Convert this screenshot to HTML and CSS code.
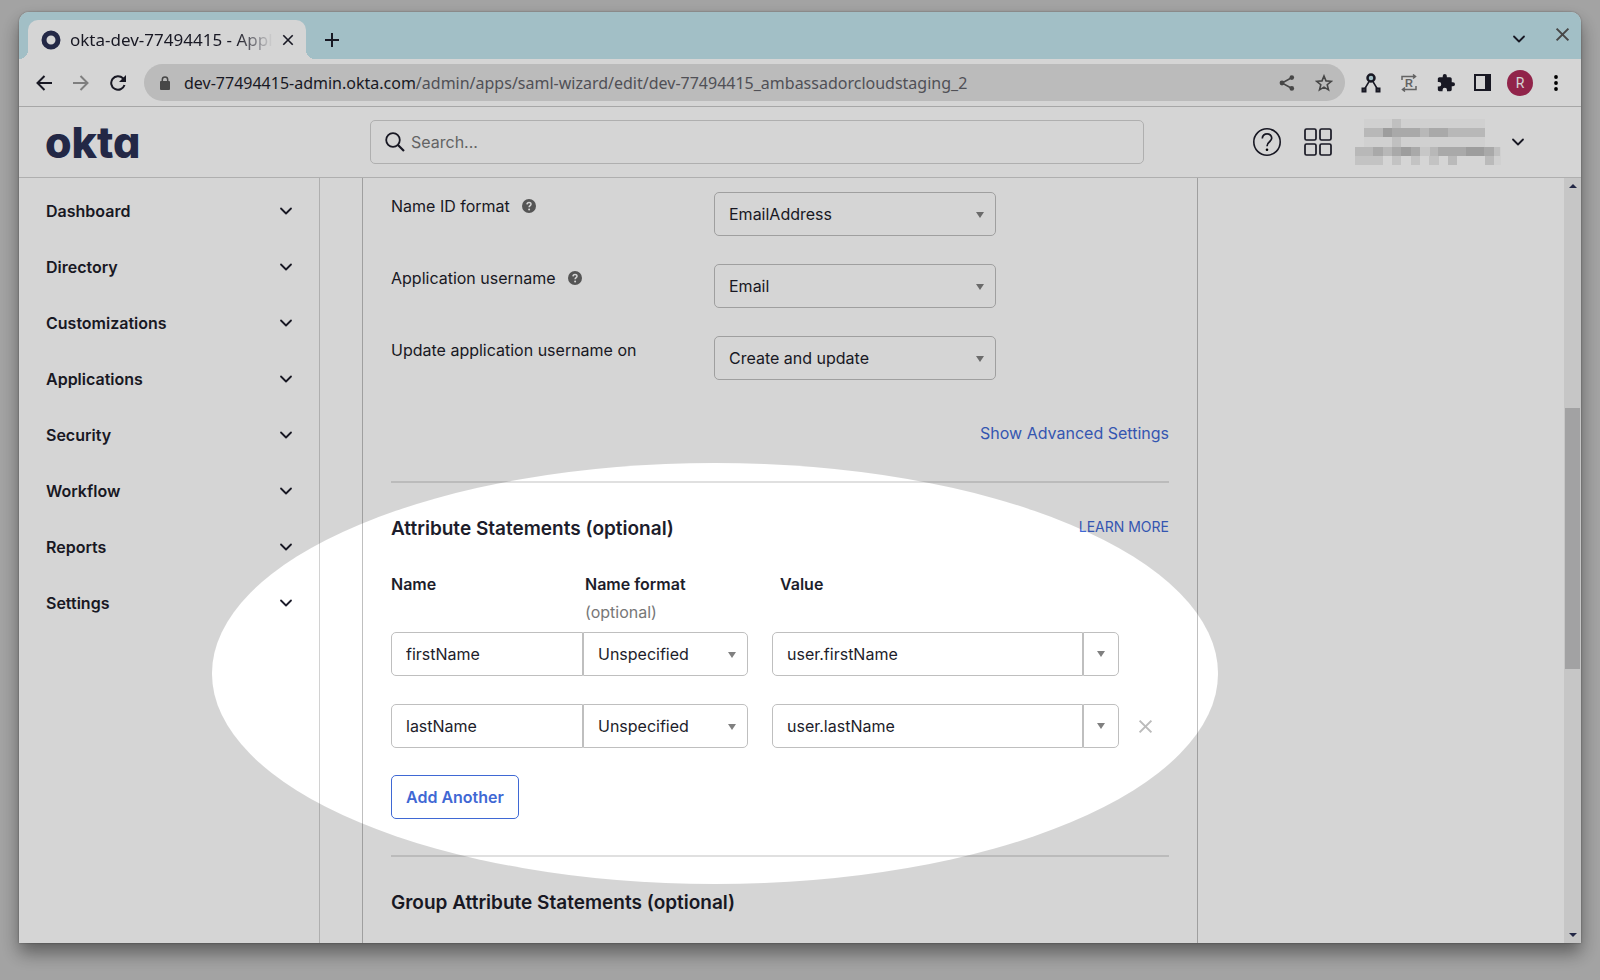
FILE: index.html
```html
<!DOCTYPE html>
<html lang="en">
<head>
<meta charset="utf-8">
<title>okta-dev-77494415 - Applications</title>
<link rel="stylesheet" href="styles.css">
</head>
<body>
<svg class="sprite" aria-hidden="true">
  <symbol id="chevron" viewBox="0 0 14 14"><path d="M2 4.500l5 5 5-5" fill="none" stroke="currentColor" stroke-width="1.800" stroke-linecap="round" stroke-linejoin="round"/></symbol>
  <symbol id="cross" viewBox="0 0 14 14"><path d="M1.500 1.500l11 11m0-11l-11 11" fill="none" stroke="currentColor" stroke-width="1.900"/></symbol>
  <symbol id="help" viewBox="0 0 14 14"><circle cx="7" cy="7" r="7" fill="currentColor"/><path d="M5 5.400c.1-2.600 4.100-2.500 4-.1C9 6.600 7.100 6.700 7.100 8.300" fill="none" stroke="#fff" stroke-width="1.500"/><circle cx="7.100" cy="10.500" r="1" fill="#fff"/></symbol>
</svg>
<div class="window">
  <div class="tabstrip">
    <div class="tab">
      <svg width="20" height="20" viewBox="0 0 20 20"><circle cx="10" cy="10" r="7" fill="none" stroke="#2b3054" stroke-width="5"/></svg>
      <span class="tab-title">okta-dev-77494415 - Appl</span>
      <button class="icon-btn" aria-label="Close tab"><svg width="12" height="12"><use href="#cross"/></svg></button>
    </div>
    <button class="icon-btn new-tab" aria-label="New tab"><svg width="14" height="14" viewBox="0 0 14 14"><path d="M7 0v14M0 7h14" stroke="currentColor" stroke-width="2"/></svg></button>
    <div class="window-btns">
      <button class="icon-btn" aria-label="Search tabs"><svg width="14" height="14"><use href="#chevron"/></svg></button>
      <button class="icon-btn close-window" aria-label="Close window"><svg width="15" height="15"><use href="#cross"/></svg></button>
    </div>
  </div>

  <div class="toolbar">
    <button class="icon-btn" aria-label="Back"><svg width="16" height="16" viewBox="0 0 16 16"><path d="M16 8H2M8.500 1L1.500 8l7 7" fill="none" stroke="currentColor" stroke-width="2"/></svg></button>
    <button class="icon-btn faded" aria-label="Forward"><svg width="16" height="16" viewBox="0 0 16 16"><path d="M0 8h14M7.500 1l7 7-7 7" fill="none" stroke="currentColor" stroke-width="2"/></svg></button>
    <button class="icon-btn" aria-label="Reload"><svg width="16" height="16" viewBox="0 0 16 16"><path d="M14.500 10A6.800 6.800 0 1 1 13 3.300L14.500 5" fill="none" stroke="currentColor" stroke-width="2"/><path d="M16 0v7H9z" fill="currentColor"/></svg></button>
    <div class="omnibox">
      <svg class="lock" width="10" height="14" viewBox="0 0 10 14"><rect y="5" width="10" height="9" rx="1" fill="currentColor"/><path d="M2.300 5.500V3.700a2.700 2.700 0 0 1 5.400 0v1.800" fill="none" stroke="currentColor" stroke-width="1.500"/></svg>
      <span class="url">dev-77494415-admin.okta.com<span class="path">/admin/apps/saml-wizard/edit/dev-77494415_ambassadorcloudstaging_2</span></span>
      <button class="icon-btn" aria-label="Share"><svg width="16" height="16" viewBox="0 0 16 16"><path d="M13 2.500L3 8l10 5.500" fill="none" stroke="currentColor" stroke-width="1.500"/><circle cx="12.800" cy="2.600" r="2.300" fill="currentColor"/><circle cx="3" cy="8" r="2.400" fill="currentColor"/><circle cx="12.800" cy="13.400" r="2.300" fill="currentColor"/></svg></button>
      <button class="icon-btn" aria-label="Bookmark"><svg width="18" height="18" viewBox="0 0 18 18"><path d="M9 2l2 4.900 5.300.4-4.100 3.400 1.300 5.200L9 13.100l-4.500 2.800 1.300-5.200L1.700 7.300 7 6.900z" fill="none" stroke="currentColor" stroke-width="1.600"/></svg></button>
    </div>
    <div class="extensions">
      <button class="icon-btn" aria-label="Graph extension"><svg width="20" height="20" viewBox="0 0 20 20"><path d="M9 7L3 17M11 7l6 10" stroke="currentColor" stroke-width="1.500"/><circle cx="10" cy="5" r="3.500" fill="#c2e5ee" stroke="currentColor" stroke-width="2.500"/><path d="M1.500 15.500h3v3h-3zM15.500 15.500h3v3h-3z" fill="#888" stroke="currentColor" stroke-width="2"/></svg></button>
      <button class="icon-btn muted" aria-label="Redirector"><svg width="18" height="18" viewBox="0 0 18 18"><path d="M2 6V2.500h13M13 .5l2.500 2L13 4.500M16 12v3.500H3M5 13.500l-2.500 2L5 17.500" fill="none" stroke="currentColor" stroke-width="1.500"/><text x="9" y="13" text-anchor="middle" class="r-mark">R</text></svg></button>
      <button class="icon-btn" aria-label="Extensions"><svg width="18" height="18" viewBox="1 1 22 22"><path d="M20.500 11H19V7c0-1.100-.9-2-2-2h-4V3.500a2.500 2.500 0 0 0-5 0V5H4c-1.100 0-2 .9-2 2v3.800h1.500a2.700 2.700 0 0 1 0 5.400H2V20c0 1.100.9 2 2 2h3.800v-1.500a2.700 2.700 0 0 1 5.400 0V22H17c1.100 0 2-.9 2-2v-4h1.500a2.500 2.500 0 0 0 0-5z" fill="currentColor"/></svg></button>
      <button class="icon-btn" aria-label="Side panel"><svg width="17" height="17" viewBox="0 0 17 17"><path d="M1 1h15v15H1z" fill="none" stroke="currentColor" stroke-width="2"/><path d="M11 1h5v15h-5z" fill="currentColor"/></svg></button>
      <button class="avatar" aria-label="Profile">R</button>
      <button class="icon-btn" aria-label="Menu"><svg width="4" height="16" viewBox="0 0 4 16"><circle cx="2" cy="2" r="1.900"/><circle cx="2" cy="8" r="1.900"/><circle cx="2" cy="14" r="1.900"/></svg></button>
    </div>
  </div>

  <header class="header">
    <a class="logo" href="#home">okta</a>
    <label class="search">
      <svg width="20" height="20" viewBox="0 0 20 20"><circle cx="8" cy="8" r="6.800" fill="none" stroke="currentColor" stroke-width="1.800"/><path d="M13 13l6 6" stroke="currentColor" stroke-width="2.200"/></svg>
      <input type="search" placeholder="Search..." aria-label="Search">
    </label>
    <div class="account">
      <button class="icon-btn" aria-label="Help"><svg width="28" height="28" viewBox="0 0 28 28"><circle cx="14" cy="14" r="13.200" fill="none" stroke="currentColor" stroke-width="1.600"/><path d="M9.300 10.500c0-6.300 9.600-6 9.400-.2-.1 3.600-4.700 3.400-4.700 7.900" fill="none" stroke="currentColor" stroke-width="1.700"/><circle cx="14" cy="21.800" r="1.300"/></svg></button>
      <button class="icon-btn" aria-label="Apps"><svg width="28" height="28" viewBox="0 0 28 28"><g fill="none" stroke="currentColor" stroke-width="1.700"><rect x="1" y="1" width="11" height="11" rx="1.500"/><rect x="16" y="1" width="11" height="11" rx="1.500"/><rect x="1" y="16" width="11" height="11" rx="1.500"/><rect x="16" y="16" width="11" height="11" rx="1.500"/></g></svg></button>
      <svg class="redacted" width="148" height="46" viewBox="0 0 148 46">
        <path fill="#fafafa" d="M9 0h121v9H9zM9 18h121v10H9zM138 28h8v18h-8z"/>
        <path fill="#e6e6e6" d="M37 0h9v28h-9zM139 28h6v9h-6z"/>
        <path fill="#ddd" d="M9 9h121v9H9zM0 28h139v9H0z"/>
        <path fill="#cbcbcb" d="M28 9h37v9H28zM74 9h19v9H74zM18 28h10v9H18zM37 28h28v9H37zM83 28h56v9H83z"/>
        <path fill="#bdbdbd" d="M28 9h9v9h-9zM46 28h10v9H46zM111 28h18v9h-18z"/>
        <path fill="#efefef" d="M65 28h10v9H65z"/>
        <path fill="#eaeaea" d="M0 37h28v9H0zM37 37h9v9h-9zM56 37h9v9h-9zM74 37h10v9H74z"/>
        <path fill="#dfdfdf" d="M93 37h9v9h-9zM130 37h9v9h-9z"/>
      </svg>
      <button class="icon-btn" aria-label="Account menu"><svg width="14" height="14"><use href="#chevron"/></svg></button>
    </div>
  </header>

  <div class="content">
    <nav class="sidebar">
      <a href="#dashboard">Dashboard<svg width="14" height="14"><use href="#chevron"/></svg></a>
      <a href="#directory">Directory<svg width="14" height="14"><use href="#chevron"/></svg></a>
      <a href="#customizations">Customizations<svg width="14" height="14"><use href="#chevron"/></svg></a>
      <a href="#applications">Applications<svg width="14" height="14"><use href="#chevron"/></svg></a>
      <a href="#security">Security<svg width="14" height="14"><use href="#chevron"/></svg></a>
      <a href="#workflow">Workflow<svg width="14" height="14"><use href="#chevron"/></svg></a>
      <a href="#reports">Reports<svg width="14" height="14"><use href="#chevron"/></svg></a>
      <a href="#settings">Settings<svg width="14" height="14"><use href="#chevron"/></svg></a>
    </nav>

    <main class="page">
      <form class="panel">
        <div class="field">
          <label for="name-id">Name ID format <svg class="tip" width="14" height="14"><use href="#help"/></svg></label>
          <span class="select"><select id="name-id"><option>EmailAddress</option></select></span>
        </div>
        <div class="field">
          <label for="app-user">Application username <svg class="tip" width="14" height="14"><use href="#help"/></svg></label>
          <span class="select"><select id="app-user"><option>Email</option></select></span>
        </div>
        <div class="field">
          <label for="update-on">Update application username on</label>
          <span class="select"><select id="update-on"><option>Create and update</option></select></span>
        </div>
        <a class="advanced" href="#advanced">Show Advanced Settings</a>

        <section class="section">
          <div class="section-head">
            <h2>Attribute Statements (optional)</h2>
            <a class="learn" href="#learn">LEARN MORE</a>
          </div>
          <div class="columns">
            <b>Name</b>
            <div><b>Name format</b><span class="optional">(optional)</span></div>
            <b>Value</b>
          </div>
          <div class="attributes">
            <div class="attribute">
              <div class="joined">
                <input type="text" value="firstName" aria-label="Name">
                <span class="select"><select aria-label="Name format"><option>Unspecified</option></select></span>
              </div>
              <div class="joined value">
                <input type="text" value="user.firstName" aria-label="Value">
                <button type="button" class="drop" aria-label="Show values"></button>
              </div>
            </div>
            <div class="attribute">
              <div class="joined">
                <input type="text" value="lastName" aria-label="Name">
                <span class="select"><select aria-label="Name format"><option>Unspecified</option></select></span>
              </div>
              <div class="joined value">
                <input type="text" value="user.lastName" aria-label="Value">
                <button type="button" class="drop" aria-label="Show values"></button>
              </div>
              <button type="button" class="icon-btn remove" aria-label="Remove"><svg width="15" height="15"><use href="#cross"/></svg></button>
            </div>
          </div>
          <button type="button" class="add">Add Another</button>
        </section>

        <section class="section">
          <div class="section-head"><h2>Group Attribute Statements (optional)</h2></div>
        </section>
      </form>
    </main>

    <div class="scrollbar" aria-hidden="true">
      <i class="arrow-up"></i><i class="space-top"></i><i class="thumb"></i><i class="space-bottom"></i><i class="arrow-down"></i>
    </div>
  </div>
</div>
<div class="spotlight"></div>
</body>
</html>
```
FILE: styles.css
```css
* { box-sizing: border-box; }

body {
  position: relative;
  display: flex;
  height: 100vh;
  margin: 0;
  padding: 12px 19px 37px;
  overflow: hidden;
  background: #c4c4c4;
  color: #1d1d2b;
  font: 16px/24px Inter, "Liberation Sans", sans-serif;
}

a { color: #3f68d4; text-decoration: none; }
svg { display: block; flex: none; }
.sprite { position: absolute; width: 0; height: 0; }

input, select, button { font: inherit; color: inherit; }

.icon-btn {
  display: flex;
  align-items: center;
  justify-content: center;
  flex: none;
  padding: 0;
  border: 0;
  background: none;
}

.window {
  display: flex;
  flex: 1;
  flex-direction: column;
  min-width: 0;
  overflow: hidden;
  border-radius: 10px 10px 0 0;
  background: #fff;
  box-shadow: 0 0 2px rgba(0, 0, 0, .4), 0 10px 18px rgba(0, 0, 0, .42);
}

/* Browser chrome */
.tabstrip {
  display: flex;
  align-items: flex-end;
  flex: none;
  height: 47px;
  padding-left: 9px;
  background: #c2e5ee;
  font-family: "Noto Sans", sans-serif;
}

.tab {
  position: relative;
  display: flex;
  align-items: center;
  gap: 9px;
  width: 278px;
  height: 39px;
  padding: 0 12px 0 13px;
  border-radius: 10px 10px 0 0;
  background: #fff;
}

.tab::before, .tab::after {
  content: "";
  position: absolute;
  bottom: 0;
  width: 9px;
  height: 9px;
}

.tab::before { right: 100%; background: radial-gradient(circle at 0 0, transparent 9px, #fff 9px); }
.tab::after { left: 100%; background: radial-gradient(circle at 100% 0, transparent 9px, #fff 9px); }

.tab-title {
  flex: 1;
  white-space: nowrap;
  font-size: 17px;
  mask-image: linear-gradient(to right, #000 82%, transparent);
}

.new-tab { height: 39px; margin-left: 19px; }
.window-btns { display: flex; gap: 29px; height: 47px; margin-left: auto; padding-right: 11px; align-items: center; padding-top: 7px; }
.close-window { align-self: flex-start; margin-top: 8px; color: #555; }

.toolbar {
  display: flex;
  align-items: center;
  flex: none;
  gap: 21px;
  height: 48px;
  padding: 0 23px 0 17px;
  border-bottom: 1px solid #c8c8c8;
}

.faded { color: #999; }
.muted { color: #777; }

.omnibox {
  display: flex;
  align-items: center;
  flex: 1;
  gap: 16px;
  min-width: 0;
  height: 37px;
  margin-left: -3px;
  padding: 0 12px 0 16px;
  border-radius: 19px;
  background: #e0e0e0;
  color: #555;
}

.url {
  flex: 1;
  overflow: hidden;
  white-space: nowrap;
  color: #1d1d2b;
  font: 16px/24px "Noto Sans", sans-serif;
}

.path { color: #606068; }

.lock { margin-right: -2px; }
.omnibox .icon-btn + .icon-btn { margin-left: 4px; }
.extensions { display: flex; align-items: center; gap: 19px; margin-left: -5px; }
.r-mark { font: bold 11px "Liberation Sans", sans-serif; fill: currentColor; }

.avatar {
  width: 26px;
  height: 26px;
  margin: 0 2px 0 -3px;
  padding: 0;
  border: 0;
  border-radius: 50%;
  background: #ae2c59;
  color: #fff;
  font: 14px/26px Roboto, sans-serif;
}

/* Site header */
.header {
  display: flex;
  align-items: center;
  flex: none;
  height: 71px;
  padding: 0 56px 0 26px;
  border-bottom: 1px solid #d2d2d2;
}

.logo {
  width: 325px;
  color: #2b3054;
  font-size: 43px;
  font-weight: 800;
  line-height: 44px;
  font-feature-settings: "cv11";
}

.search {
  display: flex;
  align-items: center;
  gap: 6px;
  flex: 1;
  max-width: 774px;
  height: 44px;
  padding: 0 14px;
  border: 1px solid #d2d2d2;
  border-radius: 5px;
}

.search input { flex: 1; min-width: 0; padding: 0; border: 0; outline: 0; background: none; }
.search input::placeholder { color: #777; opacity: 1; }

.account { display: flex; align-items: center; gap: 23px; margin-left: auto; padding-left: 24px; }
.redacted { margin-right: -15px; }

/* Page body */
.content { display: flex; flex: 1; min-height: 0; }

.sidebar {
  display: flex;
  flex-direction: column;
  flex: none;
  width: 301px;
  padding: 5px 26px 0 27px;
  border-right: 1px solid #d2d2d2;
}

.sidebar a {
  display: flex;
  align-items: center;
  justify-content: space-between;
  flex: none;
  height: 56px;
  color: inherit;
  font-weight: 600;
}

.page { display: flex; flex: 1; min-width: 0; padding-left: 42px; overflow: hidden; }

.panel {
  flex: 1;
  max-width: 836px;
  height: max-content;
  min-height: 100%;
  padding: 14px 28px;
  border: solid #bfbfbf;
  border-width: 0 1px;
}

.field {
  display: grid;
  grid-template-columns: 323px 282px;
  margin-bottom: 28px;
}

.field label { display: flex; align-items: center; gap: 12px; height: 28px; }
.tip { color: #666; }

.select { position: relative; display: flex; }

select, .joined input {
  width: 100%;
  min-width: 0;
  height: 44px;
  margin: 0;
  padding: 0 14px;
  border: 1px solid #bfbfbf;
  border-radius: 5px;
  outline: 0;
  background: #fff;
  appearance: none;
}

.select::after, .drop::after {
  content: "";
  border: solid transparent;
  border-width: 6px 4px 0;
  border-top-color: #808080;
}

.select::after { position: absolute; top: 20px; right: 12px; }

.advanced { display: block; width: max-content; margin: 41px 0 0 auto; }

.section { margin-top: 36px; border-top: 2px solid #e0e0e0; }
.section-head { display: flex; justify-content: space-between; padding-top: 32px; }
h2 { margin: 0; font-size: 19px; font-weight: 600; line-height: 28px; }
.learn { font-size: 14px; line-height: 24px; }

.columns {
  display: grid;
  grid-template-columns: 194px 195px 1fr;
  margin: 27px 0 6px;
  line-height: 28px;
}

.columns b { display: block; font-weight: 600; }
.optional { color: #777; }

.attributes { display: grid; gap: 28px; margin-bottom: 27px; }
.attribute { display: flex; align-items: center; }
.joined { display: grid; grid-template-columns: 192px 165px; margin-right: 24px; }
.joined.value { grid-template-columns: 311px 36px; margin-right: 19px; }
.joined input { border-radius: 5px 0 0 5px; }
.joined select { border-radius: 0 5px 5px 0; }

.drop {
  display: flex;
  align-items: center;
  justify-content: center;
  padding: 0;
  border: 1px solid #bfbfbf;
  border-radius: 0 5px 5px 0;
  background: #fff;
}

.remove { color: #bbb; }

.add {
  display: block;
  height: 44px;
  padding: 0 14px;
  border: 1px solid #3f68d4;
  border-radius: 5px;
  background: #fff;
  color: #3f68d4;
  font-weight: 600;
}

.scrollbar {
  display: flex;
  flex-direction: column;
  align-items: center;
  flex: none;
  width: 17px;
  padding: 6px 1px;
  background: #ededed;
}

.arrow-up, .arrow-down { border: 4px solid transparent; }
.arrow-up { border-top: 0; border-bottom-color: #2b3054; }
.arrow-down { border-bottom: 0; border-top-color: #2b3054; }
.space-top { flex: 220; }
.thumb { flex: 261; width: 100%; background: #c2c2c4; }
.space-bottom { flex: 264; }

/* Dims everything outside the highlighted ellipse */
.spotlight {
  position: absolute;
  left: 212px;
  top: 463px;
  width: 1006px;
  height: 421px;
  border-radius: 50%;
  box-shadow: 0 0 0 2000px rgba(0, 0, 0, .165);
  pointer-events: none;
}
```
